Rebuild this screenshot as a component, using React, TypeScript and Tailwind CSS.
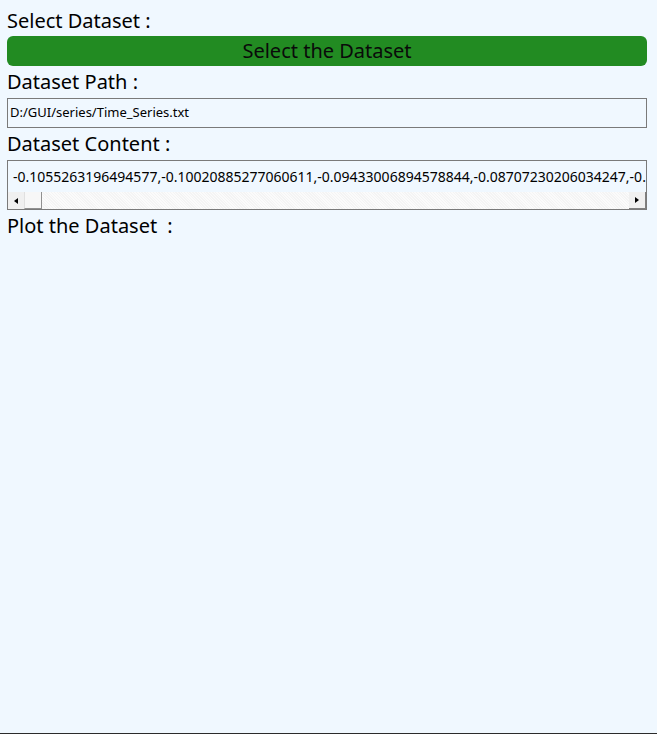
const content =
  "-0.1055263196494577,-0.10020885277060611,-0.09433006894578844,-0.08707230206034247,-0.0";

function Label({ children }: { children: string }) {
  return <div className="text-[20px] leading-[26px] text-black">{children}</div>;
}

export default function App() {
  return (
    <main
      className="flex h-[734px] flex-col border-b border-[#2b2b2b] bg-[#f0f8ff] pl-[7px] pr-[10px] pt-[8px]"
      style={{ fontFamily: '"Noto Sans", "Open Sans", sans-serif' }}
    >
      <Label>Select Dataset :</Label>
      <button
        type="button"
        className="mt-[2px] h-[30px] w-full rounded-[6px] bg-[#228b22] text-[20px] leading-[30px] text-[#0a0a0a]"
      >
        Select the Dataset
      </button>
      <div className="mt-[3px]">
        <Label>Dataset Path :</Label>
      </div>
      <div className="mt-[3px] flex h-[30px] items-center border border-[#7a7a7a] bg-[#f0f8ff] px-[2px] text-[13px] text-black">
        D:/GUI/series/Time_Series.txt
      </div>
      <div className="mt-[3px]">
        <Label>Dataset Content :</Label>
      </div>
      <div className="mt-[3px] flex h-[50px] flex-col border border-[#7a7a7a] bg-[#f0f8ff]">
        <div className="flex h-[31px] items-center overflow-hidden whitespace-nowrap pl-[5px] text-[14px] text-black">
          {content}
        </div>
        <div className="flex h-[17px] bg-[repeating-linear-gradient(45deg,#f4f4f4_0px,#f4f4f4_1px,#fbfbfb_1px,#fbfbfb_2px)]">
          <div className="flex w-[16px] items-center justify-center bg-[#f0f0f0]">
            <div className="h-0 w-0 border-y-[3px] border-r-[4px] border-y-transparent border-r-black" />
          </div>
          <div className="w-[18px] border-l border-r border-b border-l-[#e0e0e0] border-r-[#909090] border-b-[#909090] bg-[#f7f7f7]" />
          <div className="flex-1" />
          <div className="flex w-[17px] items-center justify-center border-r border-b border-[#808080] bg-[#f0f0f0]">
            <div className="h-0 w-0 border-y-[3px] border-l-[4px] border-y-transparent border-l-black" />
          </div>
        </div>
      </div>
      <div className="mt-[3px]">
        <Label>{"Plot the Dataset\u2002:"}</Label>
      </div>
    </main>
  );
}
